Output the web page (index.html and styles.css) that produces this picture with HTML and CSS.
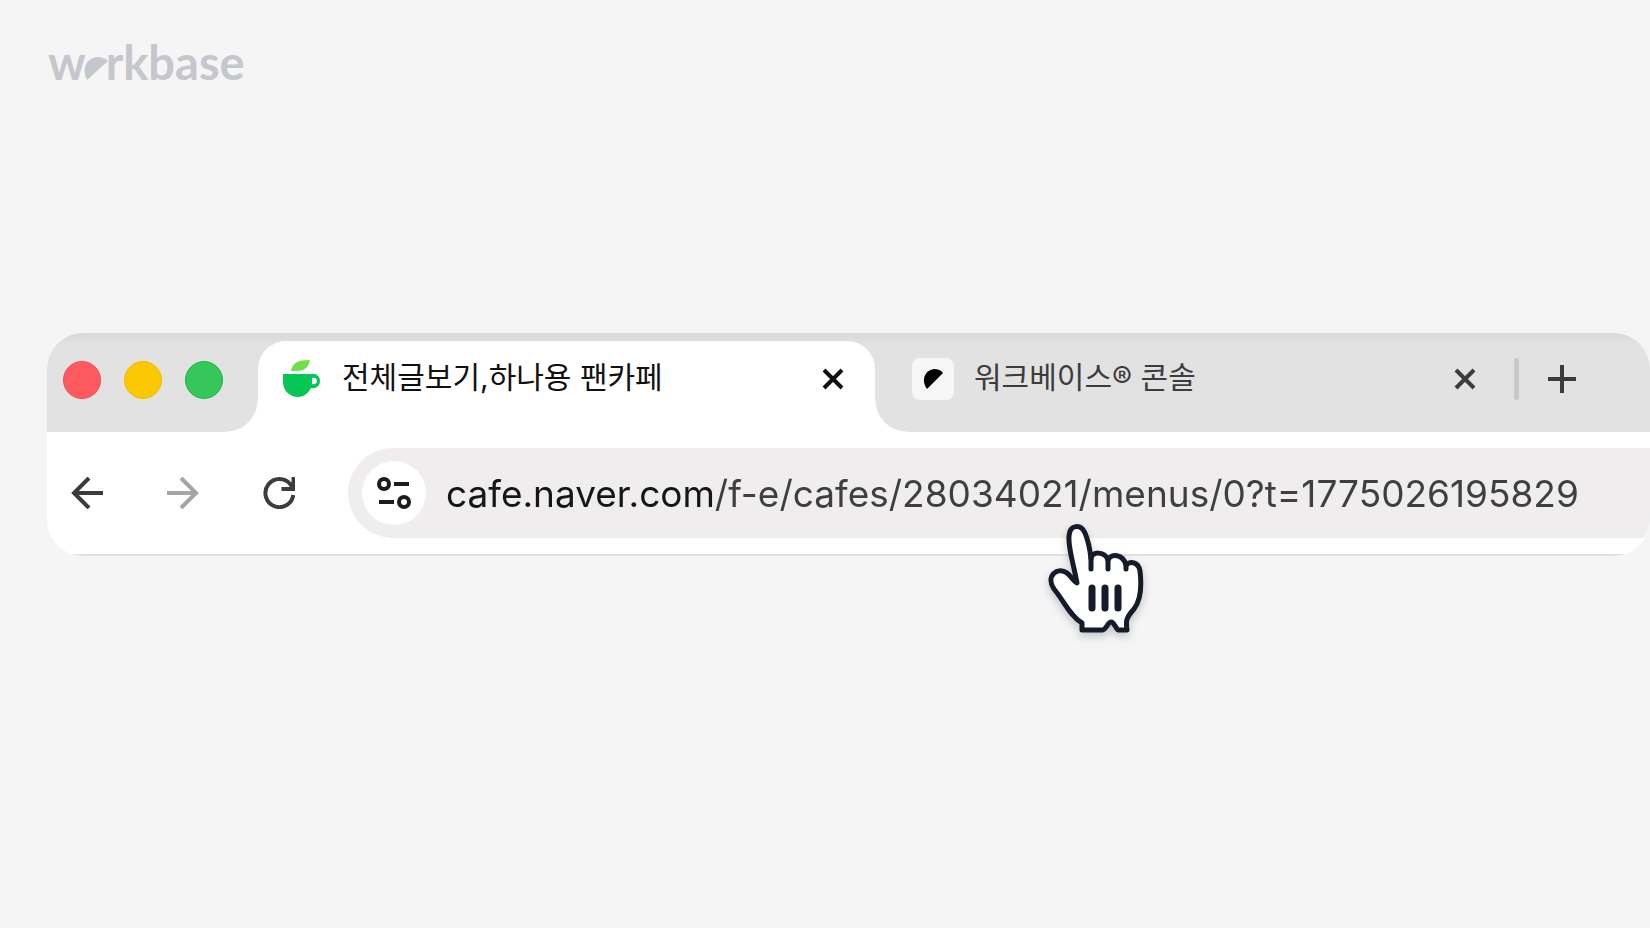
FILE: index.html
```
<!DOCTYPE html>
<html lang="ko">
<head>
  <meta charset="UTF-8">
  <title>workbase</title>
  <link rel="stylesheet" href="styles.css">
</head>
<body>
  <header>
    <a class="logo" href="#" aria-label="workbase">
      <span>w</span>
      <svg class="logo-mark" width="24" height="23" viewBox="0 0 24 23"><path d="M3 23C-3 11 3 1 13 0C17 0 21 1 24 4Z" fill="currentColor"/></svg>
      <span>rkbase</span>
    </a>
  </header>

  <main class="browser">
    <div class="tab-strip">
      <div class="lights">
        <span class="light red"></span>
        <span class="light yellow"></span>
        <span class="light green"></span>
      </div>

      <div class="tab active">
        <svg class="favicon" width="40" height="40" viewBox="0 0 40 40">
          <path d="M9 12C10 4 16 1 28 1C26 9 22 12 15 12Z" fill="#6fe04a"/>
          <path d="M1 15H29C34 14 38 17 38 22C38 27 34 30 29 29C26 35 21 38 16 38C7 38 1 31 1 23Z" fill="#06c755"/>
          <path d="M30 19C33 18 35 20 35 22C35 24 33 26 30 25Z" fill="#fff"/>
        </svg>
        <span class="tab-title">전체글보기,하나용 팬카페</span>
        <button class="icon-button" aria-label="탭 닫기">
          <svg width="24" height="24" viewBox="0 0 24 24"><path d="M3 3L21 21M21 3L3 21"/></svg>
        </button>
      </div>

      <div class="tab">
        <span class="app-icon">
          <svg width="20" height="20" viewBox="0 0 20 20"><path d="M4 20C-3 10 3 1 11 0C15 0 18 1 20 4Z" fill="#000"/></svg>
        </span>
        <span class="tab-title">워크베이스® 콘솔</span>
        <button class="icon-button" aria-label="탭 닫기">
          <svg width="24" height="24" viewBox="0 0 24 24"><path d="M3 3L21 21M21 3L3 21"/></svg>
        </button>
      </div>

      <span class="divider"></span>
      <button class="icon-button new-tab" aria-label="새 탭">
        <svg width="28" height="28" viewBox="0 0 28 28"><path d="M14 0V28M0 14H28"/></svg>
      </button>
    </div>

    <div class="toolbar">
      <div class="nav">
        <button class="icon-button" aria-label="뒤로">
          <svg width="32" height="32" viewBox="0 0 32 32"><path d="M32 16H3M18 1L3 16L18 31"/></svg>
        </button>
        <button class="icon-button forward" aria-label="앞으로">
          <svg width="32" height="32" viewBox="0 0 32 32"><path d="M0 16H29M14 1L29 16L14 31"/></svg>
        </button>
        <button class="icon-button" aria-label="새로고침">
          <svg width="32" height="32" viewBox="0 0 32 32"><path d="M30.300 18A14 14 0 1 1 27.500 7.500L30 11M18.500 12H30.500V0"/></svg>
        </button>
      </div>

      <div class="address">
        <button class="site-info" aria-label="사이트 정보">
          <svg width="34" height="32" viewBox="0 0 34 32"><circle cx="7" cy="7" r="5"/><path d="M17 7H32M2 25H17"/><circle cx="27" cy="25" r="5"/></svg>
        </button>
        <input class="url" type="text" aria-label="주소" value="cafe.naver.com/f-e/cafes/28034021/menus/0?t=1775026195829">
      </div>
    </div>

    <!-- 손 모양 커서 -->
    <svg class="cursor" width="100" height="112" viewBox="0 0 100 112">
      <path class="hand" d="M34 105V98C22 91 16 76 6 64C-3 51 10 41 19 48C24 52 25 56 29 58C25 36 20 23 21 11C22 -1 33 -1 37 8C41 17 42 25 43 34C43 26 57 26 60 35C63 28 75 29 78 40C83 35 91 38 92 46C94 63 93 75 86 84C77 94 78 97 79 105H70C67 102 66 97 63 97C60 97 58 105 54 105Z"/>
      <path class="hand-line" d="M43 33V44M60 35V44M78 39V44"/>
      <path class="hand-bar" d="M44 63V83M57 63V83M70 63V83"/>
    </svg>
  </main>
</body>
</html>
```
FILE: styles.css
```
* {
  box-sizing: border-box;
}
body {
  margin: 0;
  min-height: 100vh;
  background-color: #f5f5f5;
  font-family: Inter, "Noto Sans CJK KR", sans-serif;
}
button {
  border: 0;
  padding: 0;
  background: none;
  color: inherit;
}
svg {
  display: block;
}
header {
  height: 333px;
  padding: 36px 48px;
}
.logo {
  display: inline-flex;
  align-items: baseline;
  color: #c5c7cd;
  font-family: Lato, sans-serif;
  font-size: 47px;
  font-weight: 700;
  line-height: 52px;
  text-decoration: none;
}
.logo-mark {
  margin-left: -2px;
  margin-right: -2px;
}

/* 브라우저 창 */
.browser {
  position: relative;
  margin-left: 47px;
  padding-bottom: 2px;
  border-radius: 36px;
  background: linear-gradient(0deg, #e1e1e1 2px, #fff 2px);
}
.tab-strip {
  display: flex;
  align-items: center;
  height: 99px;
  padding-right: 74px;
  border-radius: 36px 36px 0 0;
  background: linear-gradient(#d8d8d8, #e2e2e2 12px);
  color: #3c3c3c;
}
.lights {
  display: flex;
  gap: 23px;
  width: 211px;
  padding-left: 16px;
  padding-bottom: 5px;
}
.light {
  width: 38px;
  height: 38px;
  border: 1px solid;
  border-radius: 50%;
}
.red {
  background-color: #ff5a5f;
  border-color: #f7484e;
}
.yellow {
  background-color: #fac800;
  border-color: #f2bd00;
}
.green {
  background-color: #35c759;
  border-color: #1fb545;
}
.tab {
  display: flex;
  flex: 1;
  align-items: center;
  align-self: stretch;
  padding: 0 37px;
}
.tab.active {
  position: relative;
  flex: 0 0 617px;
  align-self: flex-end;
  height: 91px;
  padding: 0 30px 16px 24px;
  border-radius: 28px 28px 0 0;
  background-color: #fff;
  color: #111;
}
/* 탭 아래쪽 둥근 모서리 */
.tab.active::before,
.tab.active::after {
  content: "";
  position: absolute;
  bottom: 0;
  width: 32px;
  height: 32px;
}
.tab.active::before {
  right: 100%;
  background: radial-gradient(circle at 0 0, transparent 31px, #fff 32px);
}
.tab.active::after {
  left: 100%;
  background: radial-gradient(circle at 100% 0, transparent 31px, #fff 32px);
}
.tab:not(.active) {
  padding-bottom: 8px;
}
.tab-title {
  flex: 1;
  margin-left: 20px;
  padding-bottom: 4px;
  font-family: Inter, "Noto Sans CJK KR", sans-serif;
  font-size: 30px;
  line-height: 40px;
  white-space: nowrap;
}
.app-icon {
  display: grid;
  place-items: center;
  width: 42px;
  height: 42px;
  border-radius: 8px;
  background-color: #f6f6f6;
}
.icon-button svg {
  fill: none;
  stroke: currentColor;
  stroke-width: 4px;
}
.divider {
  width: 5px;
  height: 42px;
  margin-bottom: 8px;
  border-radius: 3px;
  background-color: #c8c8c8;
}
.new-tab {
  margin-bottom: 8px;
  margin-left: 29px;
}

/* 주소창 */
.toolbar {
  display: flex;
  align-items: center;
  padding: 16px 0;
  overflow: hidden;
  border-radius: 0 0 36px 0;
}
.nav {
  display: flex;
  flex: 0 0 301px;
  gap: 64px;
  padding-left: 24px;
  color: #3c3c3c;
}
.forward {
  color: #a5a5a5;
}
.address {
  display: flex;
  flex: 1;
  align-items: center;
  gap: 20px;
  height: 90px;
  padding-left: 14px;
  border-radius: 45px 0 0 45px;
  background-color: #efedee;
}
.site-info {
  display: grid;
  flex: none;
  place-items: center;
  width: 64px;
  height: 64px;
  border-radius: 50%;
  background-color: #fff;
  color: #1c1c1c;
}
.site-info svg {
  fill: none;
  stroke: currentColor;
  stroke-width: 4px;
}
.url {
  flex: 1;
  min-width: 0;
  height: 60px;
  padding: 0;
  border: 0;
  outline: 0;
  /* 도메인만 진하게 */
  background: linear-gradient(90deg, #161616 268px, #3f3f3f 268px);
  -webkit-background-clip: text;
  background-clip: text;
  -webkit-text-fill-color: transparent;
  color: #3f3f3f;
  font-family: Inter, sans-serif;
  font-size: 37px;
}
.cursor {
  position: absolute;
  top: 192px;
  left: 1001px;
  overflow: visible;
  filter: drop-shadow(0 4px 4px rgba(0, 0, 0, 0.2));
}
.hand {
  fill: #fff;
  stroke: #161b29;
  stroke-width: 5px;
  stroke-linejoin: round;
}
.hand-line,
.hand-bar {
  fill: none;
  stroke: #161b29;
  stroke-width: 5px;
  stroke-linecap: round;
}
.hand-bar {
  stroke-width: 7px;
}
```
